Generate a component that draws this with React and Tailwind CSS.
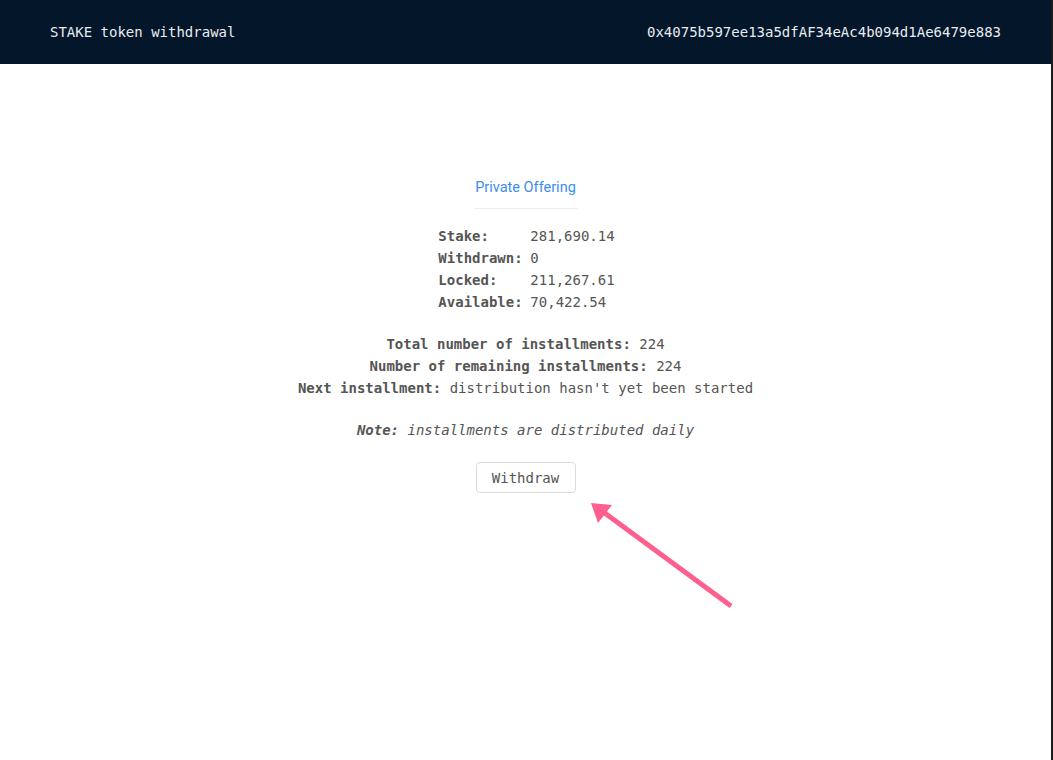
const mono = { fontFamily: '"DejaVu Sans Mono", "Liberation Mono", monospace' };

const STATS = [
  ['Stake:', '281,690.14'],
  ['Withdrawn:', '0'],
  ['Locked:', '211,267.61'],
  ['Available:', '70,422.54'],
];

function Arrow() {
  return (
    <svg className="absolute left-0 top-0 pointer-events-none" width="1053" height="760" viewBox="0 0 1053 760">
      <line x1="731" y1="606" x2="602" y2="511" stroke="#ff5f8f" strokeWidth="5" />
      <polygon points="591,503 612,505 598,523" fill="#ff5f8f" />
    </svg>
  );
}

export default function App() {
  return (
    <div className="relative min-h-screen bg-white border-r-2 border-[#1c1c1c] text-sm" style={mono}>
      <header className="h-16 bg-[#04162a] flex items-center justify-between pl-[50px] pr-[50px] text-[#e8ecf1] text-sm">
        <span>STAKE token withdrawal</span>
        <span>0x4075b597ee13a5dfAF34eAc4b094d1Ae6479e883</span>
      </header>

      <main className="flex flex-col items-center pt-[114px] text-[#555]">
        <div className="text-[#3b8ef0] text-[14.5px] leading-5 pb-[10px] w-[104px] text-center border-b border-[#eceef0]" style={{ fontFamily: 'Roboto, "Noto Sans", sans-serif' }}>
          Private Offering
        </div>

        <div className="mt-4 leading-[22px] pl-[2px]">
          {STATS.map(([k, v]) => (
            <div key={k} className="flex">
              <span className="w-[92px] font-bold">{k}</span>
              <span>{v}</span>
            </div>
          ))}
        </div>

        <div className="mt-5 leading-[22px] text-center">
          <div><b>Total number of installments:</b> 224</div>
          <div><b>Number of remaining installments:</b> 224</div>
          <div><b>Next installment:</b> distribution hasn't yet been started</div>
        </div>

        <div className="mt-5 leading-[22px] italic">
          <b>Note:</b> installments are distributed daily
        </div>

        <button className="mt-[21px] w-[100px] h-[31px] border border-[#dcdcdc] rounded-sm bg-white text-[#555] text-sm" style={mono}>
          Withdraw
        </button>
      </main>

      <Arrow />
    </div>
  );
}
